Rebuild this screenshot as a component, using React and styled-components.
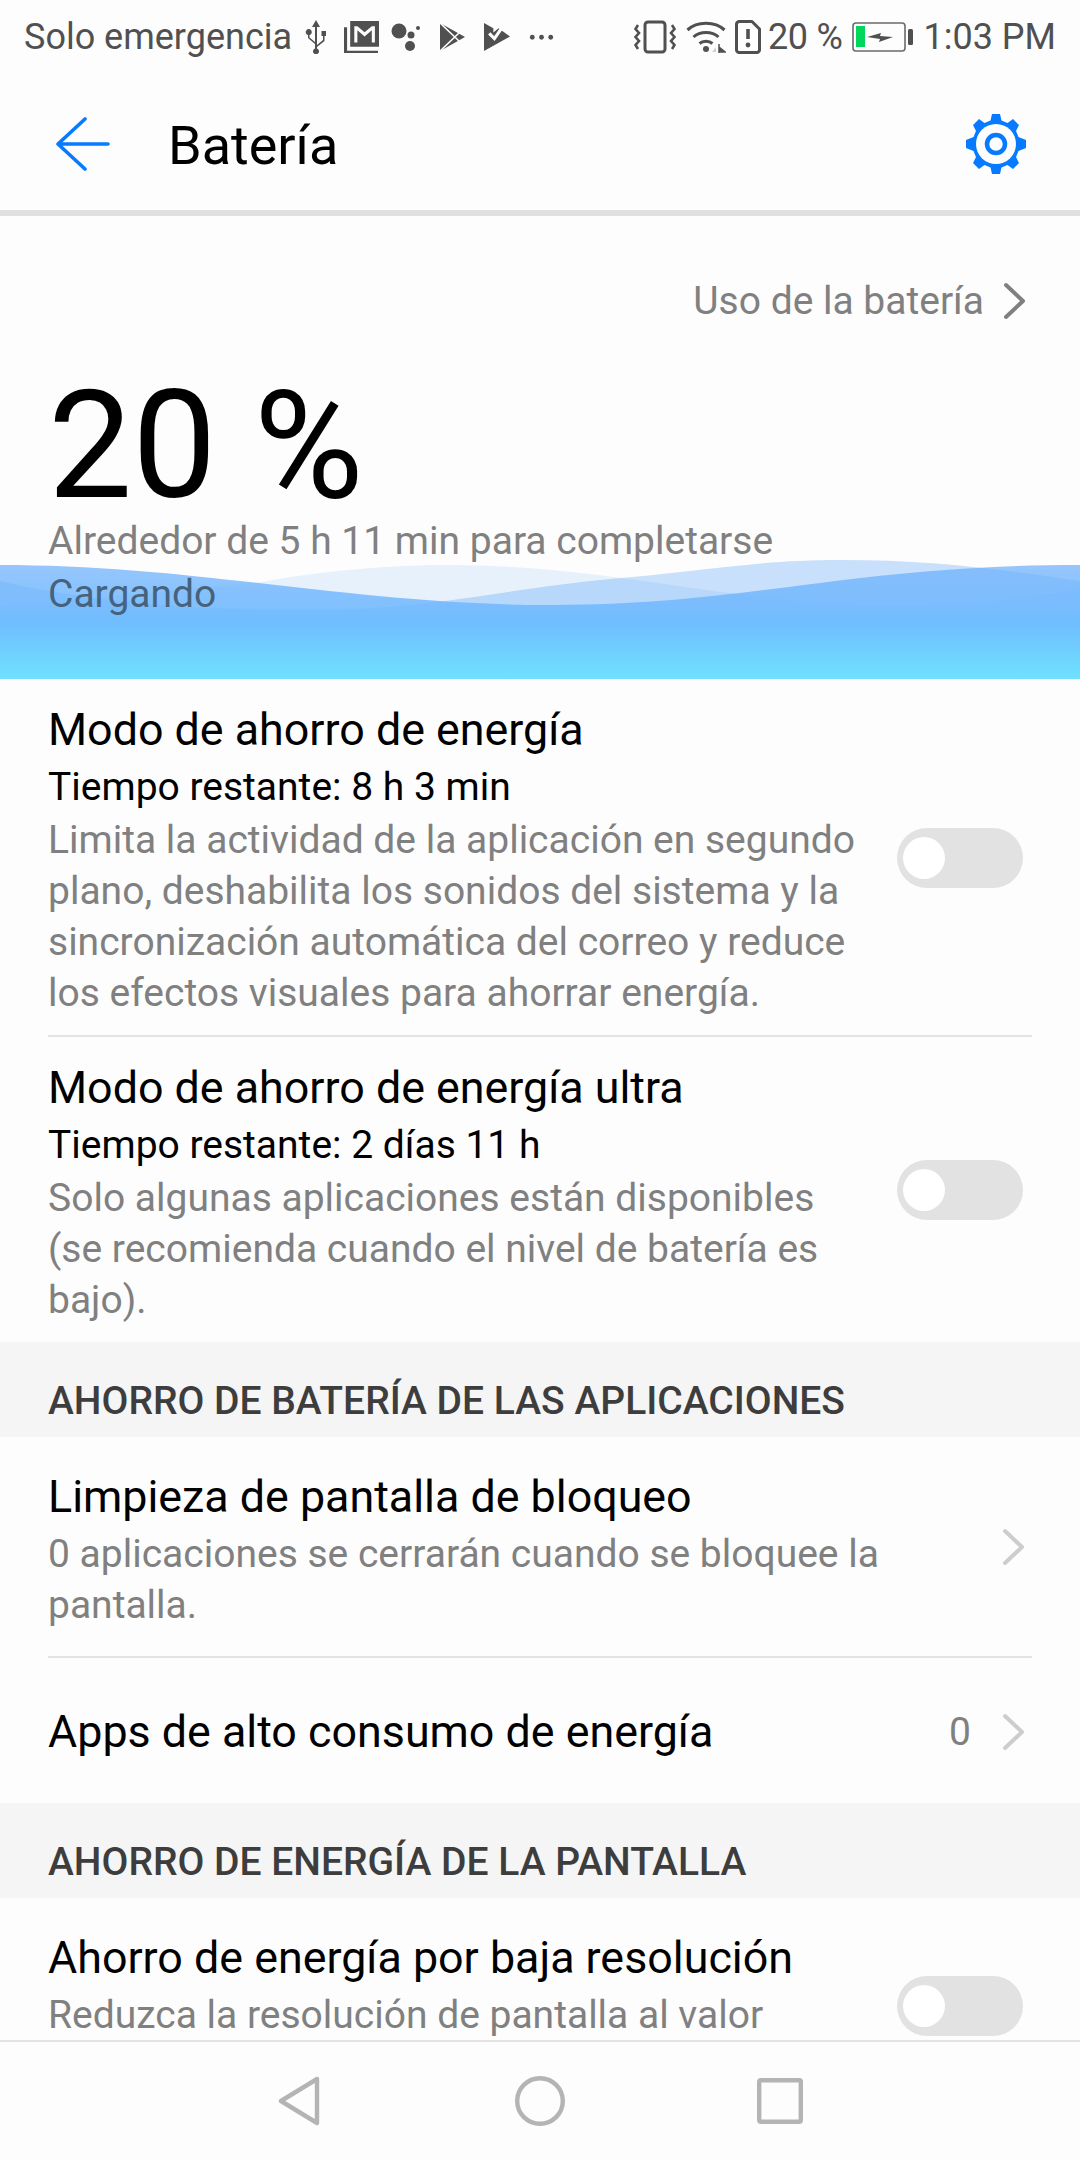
import styled, { createGlobalStyle } from "styled-components";

const GlobalStyle = createGlobalStyle`
  html, body {
    margin: 0;
    padding: 0;
    background: #fdfdfd;
    font-family: Roboto, "Liberation Sans", sans-serif;
  }
`;

const Chevron = ({ color = "#cdcdcd" }) => (
  <ChevronSvg viewBox="0 0 24 40" fill="none" stroke={color} strokeWidth="4" strokeLinecap="round" strokeLinejoin="round">
    <path d="M4 4 L21 20 L4 36" />
  </ChevronSvg>
);

const Toggle = () => (
  <ToggleTrack>
    <ToggleKnob />
  </ToggleTrack>
);

const StatusBar = () => (
  <Status>
    <StatusGroup>
      <span>Solo emergencia</span>
      <StatusIcon $w={22} $ml={13} viewBox="0 0 22 34" fill="#505050">
        <path d="M11 0 L15 7 H12 V25 L18 20 V16 H16.500 V11 H21 V16 H19.500 V21 L12 27 V28.500 A3 3 0 1 1 10 28.500 V24 L3 18 V15 A3 3 0 1 1 4.500 15 V17.500 L10 22 V7 H7 Z" />
      </StatusIcon>
      <StatusIcon $w={35} $ml={17} viewBox="0 0 34 32" fill="#505050">
        <path d="M6 0 H34 V25 H6 Z M10 5 V21 H13 V9 L20 15 L27 9 V21 H30 V5 H27 L20 11 L13 5 Z" fillRule="evenodd" />
        <path d="M0 6 H3 V29 H33 V32 H0 Z" />
      </StatusIcon>
      <StatusIcon $w={30} $ml={12} viewBox="0 0 30 28" fill="#505050">
        <circle cx="8" cy="8" r="7.500" />
        <circle cx="20" cy="12" r="3.500" />
        <circle cx="19" cy="23" r="5" />
        <circle cx="27" cy="5" r="2" />
      </StatusIcon>
      <StatusIcon $w={27} $ml={18} viewBox="0 0 27 30">
        <path d="M1 1 L26 15 L1 29 Z" fill="#505050" />
        <path d="M0 0 L20 19 M0 30 L20 11" stroke="#fdfdfd" strokeWidth="1.600" />
      </StatusIcon>
      <StatusIcon $w={26} $ml={18} viewBox="0 0 25 28" fill="#505050">
        <path d="M0 1 L9 6 L9 10 L14 6 L25 14 L0 28 Z" />
        <path d="M5 11 L10 16 L19 3" fill="none" stroke="#fdfdfd" strokeWidth="3" />
      </StatusIcon>
      <StatusIcon $w={25} $ml={19} viewBox="0 0 23 6" fill="#505050">
        <circle cx="3" cy="3" r="2.200" />
        <circle cx="11.500" cy="3" r="2.200" />
        <circle cx="20" cy="3" r="2.200" />
      </StatusIcon>
    </StatusGroup>
    <StatusGroup>
      <StatusIcon $w={42} viewBox="0 0 42 34" fill="none" stroke="#505050">
        <rect x="11" y="2" width="20" height="30" rx="3" strokeWidth="3" />
        <path d="M4 5 L1.500 9 L5 13 L1.500 17 L5 21 L1.500 25 L4 29 M38 5 L40.500 9 L37 13 L40.500 17 L37 21 L40.500 25 L38 29" strokeWidth="2.600" />
      </StatusIcon>
      <StatusIcon $w={40} $ml={10} viewBox="0 0 40 34" fill="none" stroke="#505050" strokeWidth="3">
        <path d="M1.500 10 C 11 1, 29 1, 38.500 10" strokeWidth="3.200" />
        <path d="M7.500 17 C 14 11, 26 11, 32.500 17" />
        <path d="M13.500 23.500 C 17 20.500, 23 20.500, 26.500 23.500" />
        <circle cx="20" cy="29" r="3" fill="#505050" stroke="none" />
        <path d="M30 27 L26 32 H30 Z" fill="#d0d0d0" stroke="none" />
        <path d="M33 24 V33 M33 27 L39 32 H33 Z" fill="#505050" strokeWidth="1.500" />
      </StatusIcon>
      <StatusIcon $w={26} $ml={9} viewBox="0 0 26 34" fill="none">
        <path d="M4 1.500 H17 L24.500 9 V29 A3 3 0 0 1 21.500 32.500 H4 A3 3 0 0 1 1.500 29 V4 A3 3 0 0 1 4 1.500 Z" stroke="#505050" strokeWidth="3" strokeLinejoin="round" />
        <path d="M13 9 V19" stroke="#505050" strokeWidth="3.600" />
        <circle cx="13" cy="25" r="2.400" fill="#505050" />
      </StatusIcon>
      <BatteryText>20 %</BatteryText>
      <StatusIcon $w={62} $ml={9} viewBox="0 0 62 30" fill="none">
        <rect x="1" y="1" width="52" height="28" rx="3" stroke="#6a6a6a" strokeWidth="1.600" />
        <rect x="4" y="4" width="9" height="21" fill="#00d75b" />
        <path d="M15 15 L29 11 L28 14 L41 15 L27 20 L28 17 Z" fill="#505050" />
        <rect x="56" y="7" width="5" height="16" rx="1.500" fill="#505050" />
      </StatusIcon>
      <TimeText>1:03 PM</TimeText>
    </StatusGroup>
  </Status>
);

const App = () => (
  <Screen>
    <GlobalStyle />
    <StatusBar />
    <Header>
      <BackIcon viewBox="0 0 54 54" fill="none" stroke="#067bff" strokeWidth="3.600" strokeLinecap="round" strokeLinejoin="round">
        <path d="M29 2 L2 27 L29 52 M2 27 H52" />
      </BackIcon>
      <Title>Batería</Title>
      <GearIcon viewBox="0 0 60 60">
        <path
          fill="#067bff"
          d="M26 0 H34 L35.500 6.500 L41.500 9 L47 5 L53 11 L50 17 L52.500 23 L60 26 V34 L52.500 37 L50 43 L53 49 L47 55 L41.500 51 L35.500 53.500 L34 60 H26 L24.500 53.500 L18.500 51 L13 55 L7 49 L10 43 L7.500 37 L0 34 V26 L7.500 23 L10 17 L7 11 L13 5 L18.500 9 L24.500 6.500 Z"
        />
        <circle cx="30" cy="30" r="20" fill="#fdfdfd" />
        <circle cx="30" cy="30" r="9" fill="none" stroke="#067bff" strokeWidth="4.500" />
      </GearIcon>
    </Header>
    <Content>
      <Hero>
        <WaveArt viewBox="0 0 1080 120" preserveAspectRatio="none">
          <defs>
            <linearGradient id="waveFill" x1="0" y1="0" x2="0" y2="1">
              <stop offset="0" stopColor="#6aaefc" stopOpacity="0.7" />
              <stop offset="0.36" stopColor="#6fb8fe" stopOpacity="0.85" />
              <stop offset="0.5" stopColor="#6fbdfe" stopOpacity="1" />
              <stop offset="1" stopColor="#6fe1ff" stopOpacity="1" />
            </linearGradient>
          </defs>
          <path fill="#4f9ff8" fillOpacity="0.13" d="M0 47 C 100 40, 180 30, 262 23 C 320 12, 390 6, 448 6 C 510 6, 570 12, 621 19 C 720 32, 800 47, 897 47 C 960 47, 1030 40, 1080 29 V120 H0 Z" />
          <path fill="#4f9ff8" fillOpacity="0.3" d="M0 22 C 100 45, 200 51, 310 51 C 430 51, 500 30, 621 19 C 720 10, 760 1, 842 1 C 930 1, 1000 10, 1080 22 V120 H0 Z" />
          <path fill="url(#waveFill)" d="M0 6 C 200 6, 350 46, 552 46 C 750 46, 850 6, 1080 6 V120 H0 Z" />
        </WaveArt>
        <UsageLink>
          <UsageText>Uso de la batería</UsageText>
          <Chevron color="#808080" />
        </UsageLink>
        <Percent>20 %</Percent>
        <HeroLine>Alrededor de 5 h 11 min para completarse</HeroLine>
        <HeroLine $status>Cargando</HeroLine>
      </Hero>

      <Row>
        <RowText>
          <RowTitle>Modo de ahorro de energía</RowTitle>
          <RowSub>Tiempo restante: 8 h 3 min</RowSub>
          <RowDesc>
            Limita la actividad de la aplicación en segundo plano, deshabilita los sonidos del sistema y la sincronización automática del correo y reduce los efectos visuales para ahorrar energía.
          </RowDesc>
        </RowText>
        <Toggle />
      </Row>
      <Row $last>
        <RowText>
          <RowTitle>Modo de ahorro de energía ultra</RowTitle>
          <RowSub>Tiempo restante: 2 días 11 h</RowSub>
          <RowDesc>
            Solo algunas aplicaciones están disponibles (se recomienda cuando el nivel de batería es bajo).
          </RowDesc>
        </RowText>
        <Toggle />
      </Row>

      <SectionBand>AHORRO DE BATERÍA DE LAS APLICACIONES</SectionBand>
      <LinkRow>
        <LinkText>
          <RowTitle>Limpieza de pantalla de bloqueo</RowTitle>
          <LinkDesc>0 aplicaciones se cerrarán cuando se bloquee la pantalla.</LinkDesc>
        </LinkText>
        <Chevron />
      </LinkRow>
      <SingleRow>
        <RowTitle>Apps de alto consumo de energía</RowTitle>
        <RowValue>
          <CountText>0</CountText>
          <Chevron />
        </RowValue>
      </SingleRow>

      <SectionBand>AHORRO DE ENERGÍA DE LA PANTALLA</SectionBand>
      <ClippedRow>
        <ClippedText>
          <RowTitle>Ahorro de energía por baja resolución</RowTitle>
          <LinkDesc>Reduzca la resolución de pantalla al valor</LinkDesc>
        </ClippedText>
        <Toggle />
      </ClippedRow>
    </Content>
    <NavBar>
      <NavSlot>
        <NavIcon $w={44} viewBox="0 0 44 50" fill="none">
          <path d="M39 3 L3 25 L39 47 Z" stroke="#b4b4b4" strokeWidth="4.400" strokeLinejoin="round" />
        </NavIcon>
      </NavSlot>
      <NavSlot>
        <NavIcon $w={50} viewBox="0 0 50 50" fill="none">
          <circle cx="25" cy="25" r="22.800" stroke="#b4b4b4" strokeWidth="4.400" />
        </NavIcon>
      </NavSlot>
      <NavSlot>
        <NavIcon $w={46} viewBox="0 0 46 46" fill="none">
          <rect x="2.200" y="2.200" width="41.600" height="41.600" rx="1.500" stroke="#b4b4b4" strokeWidth="4.400" />
        </NavIcon>
      </NavSlot>
    </NavBar>
  </Screen>
);

const Screen = styled.div`
  display: flex;
  flex-direction: column;
  width: 1080px;
  height: 2160px;
  overflow: hidden;
  background: #fdfdfd;
`;

const Status = styled.div`
  display: flex;
  align-items: center;
  justify-content: space-between;
  flex: none;
  box-sizing: border-box;
  height: 74px;
  padding: 0 24px;
  color: #505050;
  font-size: 36px;
`;
const StatusGroup = styled.div`
  display: flex;
  align-items: center;
`;
const StatusIcon = styled.svg`
  flex: none;
  width: ${(p) => p.$w}px;
  margin-left: ${(p) => p.$ml || 0}px;
`;
const BatteryText = styled.span`
  margin-left: 7px;
  letter-spacing: -0.3px;
`;
const TimeText = styled.span`
  margin-left: 10px;
`;

const Header = styled.div`
  display: flex;
  align-items: center;
  flex: none;
  box-sizing: border-box;
  height: 142px;
  padding: 4px 54px 0 56px;
  border-bottom: 6px solid #e0e0e0;
`;
const BackIcon = styled.svg`
  flex: none;
  width: 54px;
  height: 54px;
`;
const Title = styled.h1`
  flex: 1;
  margin: 2px 0 0 58px;
  color: #000;
  font-size: 54px;
  font-weight: 400;
`;
const GearIcon = styled.svg`
  flex: none;
  width: 60px;
  height: 60px;
`;

const Content = styled.div`
  flex: 1;
  min-height: 0;
  overflow: hidden;
`;

const Hero = styled.section`
  position: relative;
  box-sizing: border-box;
  height: 463px;
  padding: 60px 48px 0;
`;
const WaveArt = styled.svg`
  position: absolute;
  left: 0;
  bottom: 0;
  width: 1080px;
  height: 120px;
`;
const UsageLink = styled.div`
  position: relative;
  display: flex;
  align-items: center;
  justify-content: flex-end;
  gap: 18px;
  height: 50px;
  margin-right: 6px;
`;
const UsageText = styled.span`
  color: #808080;
  font-size: 39px;
`;
const Percent = styled.div`
  position: relative;
  margin-top: 51px;
  color: #000;
  font-size: 150px;
  font-weight: 400;
  line-height: 138px;
`;
const HeroLine = styled.div`
  position: relative;
  color: ${(p) => (p.$status ? "#46627c" : "#808080")};
  font-size: 39px;
  line-height: 53px;
`;

const Row = styled.div`
  display: flex;
  align-items: center;
  justify-content: space-between;
  margin: 0 48px;
  padding: 23px 9px 16px 0;
  border-bottom: ${(p) => (p.$last ? "none" : "2px solid #e4e4e4")};
`;
const LinkRow = styled(Row)`
  padding: 32px 7px 25px 0;
  border-bottom: 2px solid #e4e4e4;
  svg {
    margin-bottom: 7px;
  }
`;
const SingleRow = styled(Row)`
  height: 145px;
  box-sizing: border-box;
  padding: 2px 7px 0 0;
  border-bottom: none;
`;
const ClippedRow = styled(Row)`
  height: 222px;
  box-sizing: border-box;
  padding: 0 9px 0 0;
  border-bottom: none;
`;
const RowText = styled.div`
  width: 815px;
`;
const LinkText = styled.div`
  width: 845px;
`;
const ClippedText = styled(LinkText)`
  align-self: flex-start;
  padding-top: 32px;
`;
const RowTitle = styled.div`
  color: #000;
  font-size: 44.8px;
  line-height: 56px;
`;
const RowSub = styled.div`
  margin-top: 4px;
  color: #000;
  font-size: 39px;
  line-height: 51px;
`;
const RowDesc = styled.div`
  margin-top: 2px;
  color: #808080;
  font-size: 39px;
  line-height: 51px;
`;
const LinkDesc = styled(RowDesc)`
  margin-top: 4px;
`;
const RowValue = styled.div`
  display: flex;
  align-items: center;
  gap: 30px;
`;
const CountText = styled.span`
  color: #808080;
  font-size: 39px;
`;
const ChevronSvg = styled.svg`
  flex: none;
  width: 24px;
  height: 40px;
`;

const ToggleTrack = styled.div`
  flex: none;
  display: flex;
  align-items: center;
  box-sizing: border-box;
  width: 126px;
  height: 60px;
  margin-bottom: 6px;
  padding-left: 6px;
  border-radius: 30px;
  background: #e2e2e2;
`;
const ToggleKnob = styled.div`
  width: 42px;
  height: 42px;
  border-radius: 50%;
  background: #fff;
`;

const SectionBand = styled.div`
  box-sizing: border-box;
  height: 95px;
  padding: 23px 48px 0;
  background: #f5f5f5;
  color: #3d3d3d;
  font-size: 39px;
  font-weight: 500;
  line-height: 72px;
`;

const NavBar = styled.nav`
  display: flex;
  align-items: center;
  justify-content: center;
  flex: none;
  box-sizing: border-box;
  height: 120px;
  border-top: 2px solid #e4e4e4;
`;
const NavSlot = styled.div`
  display: flex;
  justify-content: center;
  width: 240px;
`;
const NavIcon = styled.svg`
  width: ${(p) => p.$w}px;
`;

export default App;
